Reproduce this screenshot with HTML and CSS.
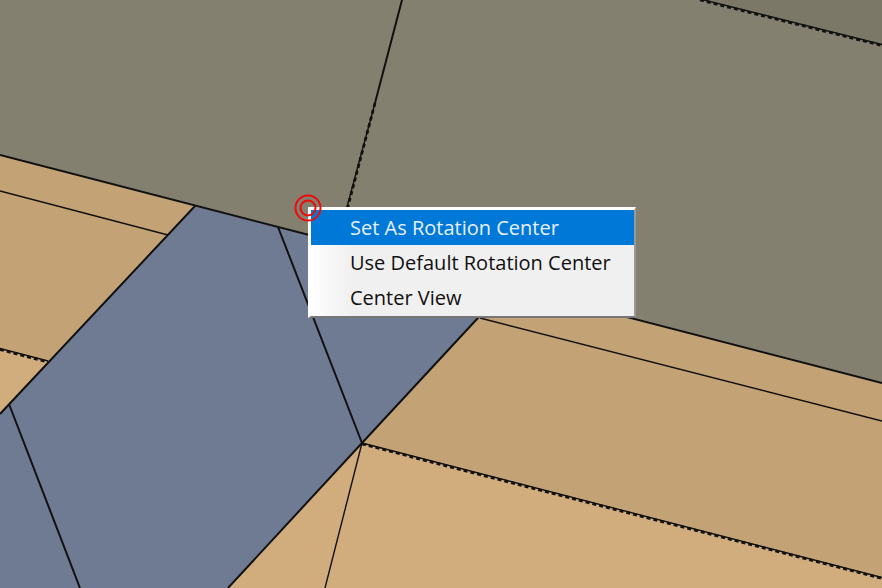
FILE: index.html
```html
<!DOCTYPE html>
<html lang="en">
<head>
  <meta charset="UTF-8">
  <meta name="viewport" content="width=device-width, initial-scale=1.0">
  <title>Model View</title>
  <link rel="stylesheet" href="styles.css">
</head>
<body>

<div class="viewport">
  <!-- Model faces and edges -->
  <svg class="scene" viewBox="0 0 882 588" preserveAspectRatio="xMinYMin slice" aria-hidden="true">
    <!-- Faces -->
    <rect class="face-wall" width="882" height="588"/>
    <polygon class="face-wall-dark" points="699,-1 882,45 882,-1"/>
    <polygon class="face-tan" points="0,155 882,383 882,588 0,588"/>
    <polygon class="face-tan-light" points="0,349 48,361 0,412"/>
    <polygon class="face-tan-light" points="362,443 882,578 882,588 228,588"/>
    <polygon class="face-blue" points="195,206 530,292 502,292 362,443 228,588 0,588 0,414"/>

    <!-- Solid edges -->
    <path class="edge" d="M0 155L882 383M195 206L0 414M502 292L362 443L228 588M278 227L362 443M9 404L80 588M402 0L375 103"/>
    <path class="edge thin" d="M0 191L168 235M480 318L882 421M362 443L325 588"/>

    <!-- Jagged edges -->
    <path class="edge thin" d="M700 -1L882 44.5M362 443L882 577.5M0 348.5L48 361M375 103L347 207"/>
    <path class="edge dashed" d="M700 0L882 45.5M362 444L882 578.5M0 349.5L48 362M375 103L347.5 208"/>
  </svg>

  <!-- Context menu -->
  <div class="menu" role="menu">
    <button class="menu-item active" role="menuitem">Set As Rotation Center</button>
    <button class="menu-item" role="menuitem">Use Default Rotation Center</button>
    <button class="menu-item" role="menuitem">Center View</button>
  </div>

  <!-- Rotation center marker -->
  <svg class="marker" viewBox="0 0 28 28" aria-hidden="true">
    <circle cx="14" cy="14" r="12.5"/>
    <circle cx="14" cy="14" r="7.5"/>
  </svg>
</div>

</body>
</html>
```
FILE: styles.css
```css
* { box-sizing: border-box; }

body {
  margin: 0;
  font-family: "Open Sans", "Noto Sans", sans-serif;
}

.viewport {
  position: relative;
  height: 100vh;
  overflow: hidden;
  background: #838070;
}

.scene {
  display: block;
  width: 100%;
  height: 100%;
}

.face-wall { fill: #838070; }
.face-wall-dark { fill: #7b7868; }
.face-tan { fill: #c3a275; }
.face-tan-light { fill: #d1ac7d; }
.face-blue { fill: #6f7b93; }

.edge {
  fill: none;
  stroke: #111;
  stroke-width: 2;
}

.edge.thin {
  stroke-width: 1.4;
}

.edge.dashed {
  stroke-width: 2.8;
  stroke-dasharray: 4 3;
}

.menu {
  position: absolute;
  top: 207px;
  left: 308px;
  display: flex;
  flex-direction: column;
  width: 328px;
  padding-bottom: 1px;
  border: 3px solid #fff;
  border-right: 2px solid #999;
  border-bottom: 2px solid #777;
  background: linear-gradient(to right, #fff, #f0f0f0 40px);
}

.menu-item {
  height: 35px;
  padding: 0 24px 0 39px;
  border: none;
  background: none;
  color: #111;
  font-family: inherit;
  font-size: 20px;
  line-height: 35px;
  text-align: left;
  white-space: nowrap;
}

.menu-item.active,
.menu-item:hover {
  background: #0078d7;
  color: #e6f1fb;
}

.marker {
  position: absolute;
  top: 194px;
  left: 294px;
  width: 28px;
  height: 28px;
}

.marker circle {
  fill: none;
  stroke: #f00a0a;
  stroke-width: 2;
}
```
